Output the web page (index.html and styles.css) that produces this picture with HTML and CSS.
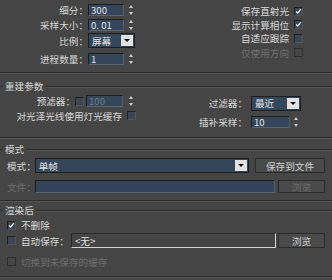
FILE: index.html
```html
<!DOCTYPE html>
<html lang="zh">
<head>
    <meta charset="UTF-8">
    <title>渲染参数</title>
    <link rel="stylesheet" href="styles.css">
</head>
<body>
    <div class="panel">

        <!-- 顶部参数 -->
        <div class="sect top">
            <div class="top-left">
                <span class="lbl">细分：</span>
                <div class="ctl"><span class="field w36">300</span><span class="spin"></span></div>
                <span class="lbl">采样大小：</span>
                <div class="ctl"><span class="field w36">0. 01</span><span class="spin"></span></div>
                <span class="lbl">比例：</span>
                <div class="ctl"><span class="select w47">屏幕<span class="arrow"></span></span></div>
                <span class="lbl">进程数量：</span>
                <div class="ctl"><span class="field w36">1</span><span class="spin"></span></div>
            </div>
            <div class="top-right">
                <div class="chk-row"><span>保存直射光</span><span class="cb on"><svg viewBox="0 0 9 9"><path d="M1.5 4.5 L3.5 6.5 L7.5 1.5" /></svg></span></div>
                <div class="chk-row"><span>显示计算相位</span><span class="cb on"><svg viewBox="0 0 9 9"><path d="M1.5 4.5 L3.5 6.5 L7.5 1.5" /></svg></span></div>
                <div class="chk-row"><span>自适应跟踪</span><span class="cb"></span></div>
                <div class="chk-row dis"><span>仅使用方向</span><span class="cb"></span></div>
            </div>
        </div>

        <!-- 重建参数 -->
        <div class="sect g2">
            <div class="gtitle"><span>重建参数</span></div>
            <div class="g2-body">
                <div class="g2-left">
                    <div class="row-pre">
                        <span>预滤器：</span>
                        <span class="cb"></span>
                        <span class="field w37 dim">100</span>
                        <span class="spin"></span>
                    </div>
                    <div class="row-gloss">
                        <span>对光泽光线使用灯光缓存</span>
                        <span class="cb"></span>
                    </div>
                </div>
                <div class="g2-right">
                    <span class="lbl">过滤器：</span>
                    <span class="select w50">最近<span class="arrow"></span></span>
                    <span class="lbl">插补采样：</span>
                    <div class="ctl"><span class="field w39">10</span><span class="spin"></span></div>
                </div>
            </div>
        </div>

        <!-- 模式 -->
        <div class="sect g3">
            <div class="gtitle"><span>模式</span></div>
            <div class="row-mode">
                <span class="lbl-l">模式：</span>
                <span class="select grow">单帧<span class="arrow"></span></span>
                <span class="btn w70">保存到文件</span>
            </div>
            <div class="row-file">
                <span class="lbl-l dis">文件：</span>
                <span class="field grow"></span>
                <span class="btn w47 dis">浏览</span>
            </div>
        </div>

        <!-- 渲染后 -->
        <div class="sect g4">
            <div class="gtitle"><span>渲染后</span></div>
            <div class="row-keep">
                <span class="cb on"><svg viewBox="0 0 9 9"><path d="M1.5 4.5 L3.5 6.5 L7.5 1.5" /></svg></span>
                <span>不删除</span>
            </div>
            <div class="row-auto">
                <span class="cb"></span>
                <span class="auto-lbl">自动保存：</span>
                <span class="sunk grow">&lt;无&gt;</span>
                <span class="btn w47">浏览</span>
            </div>
            <div class="row-switch dis">
                <span class="cb"></span>
                <span>切换到未保存的缓存</span>
            </div>
        </div>

    </div>
</body>
</html>
```

FILE: styles.css
```css
* { box-sizing: border-box; }
body {
    margin: 0;
    background: #454545;
    font-family: "Noto Sans CJK SC", "Noto Sans", sans-serif;
    font-size: 9.6px;
    color: #d8d8d8;
    width: 332px; height: 280px; overflow: hidden;
}
.panel { width: 332px; }
.sect { border-bottom: 1px solid #2b2b2b; box-shadow: 0 1px 0 #555; }
.dis, .dis span { color: #6e6e6e; }

/* campos */
.field {
    display: flex; align-items: center;
    height: 12px; padding-left: 2px;
    background: #34465a;
    border: 1px solid #1d1d1d; border-right-color: #53606c; border-bottom-color: #5b6570;
    color: #e4e4e4; white-space: pre;
}
.field.dim { color: #6d7a88; }
.w36 { width: 36px; } .w37 { width: 37px; } .w39 { width: 39px; }
.w47 { width: 47px; } .w50 { width: 50px; } .w70 { width: 70px; }
.grow { flex: 1; }

.spin {
    width: 5px; height: 10px;
    display: flex; flex-direction: column; justify-content: space-between; align-items: center;
}
.spin::before, .spin::after {
    content: ''; width: 0; height: 0;
    border-left: 2px solid transparent; border-right: 2px solid transparent;
}
.spin::before { border-bottom: 3px solid #cfcfcf; }
.spin::after { border-top: 3px solid #cfcfcf; }

.select {
    display: flex; align-items: center; justify-content: space-between;
    height: 15px; padding-left: 3px; padding-right: 1px;
    background: #34465a;
    border: 1px solid #1d1d1d;
    color: #e4e4e4;
}
.select .arrow {
    width: 12px; height: 11px; background: #e2e2e2;
    display: flex; align-items: center; justify-content: center;
}
.select .arrow::after {
    content: ''; width: 0; height: 0;
    border-left: 3px solid transparent; border-right: 3px solid transparent;
    border-top: 3px solid #111;
}

.cb {
    width: 9px; height: 9px; flex: none;
    background: #3a4757;
    border: 1px solid #1f1f1f; border-right-color: #555; border-bottom-color: #555;
    display: flex; align-items: center; justify-content: center;
}
.cb svg { width: 9px; height: 9px; }
.cb path { fill: none; stroke: #f2f2f2; stroke-width: 1.6; }
.dis .cb { background: transparent; border-color: #2e2e2e; }

.btn {
    display: flex; align-items: center; justify-content: center;
    background: #4a4a4a;
    border: 1px solid #2b2b2b;
    color: #d0d0d0;
}
.btn.dis { color: #6a6a6a; }

.sunk {
    display: flex; align-items: center;
    height: 15px; padding-left: 3px;
    border: 1px solid #2a2a2a; border-right-color: #d4d4d4; border-bottom-color: #d4d4d4;
    color: #e0e0e0;
}

/* titulo de grupo */
.gtitle { display: flex; align-items: center; gap: 2px; height: 10px; }
.gtitle::before { content: ''; width: 3px; height: 1px; background: #2b2b2b; }
.gtitle::after { content: ''; flex: 1; height: 1px; background: #2b2b2b; box-shadow: 0 1px 0 #555; }

/* seccion superior */
.top { height: 73px; display: flex; justify-content: space-between; }
.top-left {
    display: grid; grid-template-columns: 88px auto;
    grid-template-rows: 14px 15px 17px 20px;
    padding-top: 3px; align-items: center;
}
.lbl { text-align: right; white-space: nowrap; }
.ctl { display: flex; align-items: center; gap: 4px; }
.top-right {
    display: grid; grid-template-rows: 14px 13px 14px 15px;
    padding-top: 4px; padding-right: 29px;
    justify-items: end; align-items: center;
}
.chk-row { display: flex; align-items: center; gap: 5px; }

/* reconstruccion */
.g2 { height: 65px; padding-top: 8px; }
.g2-body { display: flex; justify-content: space-between; padding-right: 31px; }
.g2-left { width: 136px; padding-top: 4px; display: flex; flex-direction: column; align-items: flex-end; }
.row-pre { display: flex; align-items: center; height: 12px; margin-right: 3px; }
.row-pre .cb { margin-right: 2px; }
.row-pre .field { margin-right: 5px; }
.row-gloss { display: flex; align-items: center; gap: 5px; height: 11px; margin-top: 3px; white-space: nowrap; }
.g2-right {
    display: grid; grid-template-columns: auto 50px;
    grid-template-rows: 14px 14px;
    row-gap: 5px; column-gap: 4px;
    padding-top: 5px; align-items: center;
}
.g2-right .ctl { gap: 3px; }

/* modo */
.g3 { height: 63px; padding-top: 6px; }
.row-mode, .row-file { display: flex; align-items: center; padding: 0 7px; }
.row-mode { height: 15px; margin-top: 4px; }
.row-mode .btn { height: 15px; margin-left: 6px; }
.row-file { height: 13px; margin-top: 7px; }
.row-file .field { height: 13px; background: #33445a; }
.row-file .btn { height: 13px; margin-left: 3px; }
.lbl-l { flex: none; white-space: nowrap; margin-right: -1px; }

/* despues de render */
.g4 { height: 76px; padding-top: 4px; }
.row-keep, .row-auto, .row-switch { display: flex; align-items: center; gap: 5px; padding: 0 7px; }
.row-keep { height: 14px; margin-top: 3px; }
.row-auto { height: 15px; margin-top: 1px; gap: 0; }
.row-auto .cb { margin-right: 5px; }
.auto-lbl { width: 50px; white-space: nowrap; }
.row-auto .btn { height: 15px; margin-left: 2px; }
.row-switch { height: 13px; margin-top: 7px; }
```
